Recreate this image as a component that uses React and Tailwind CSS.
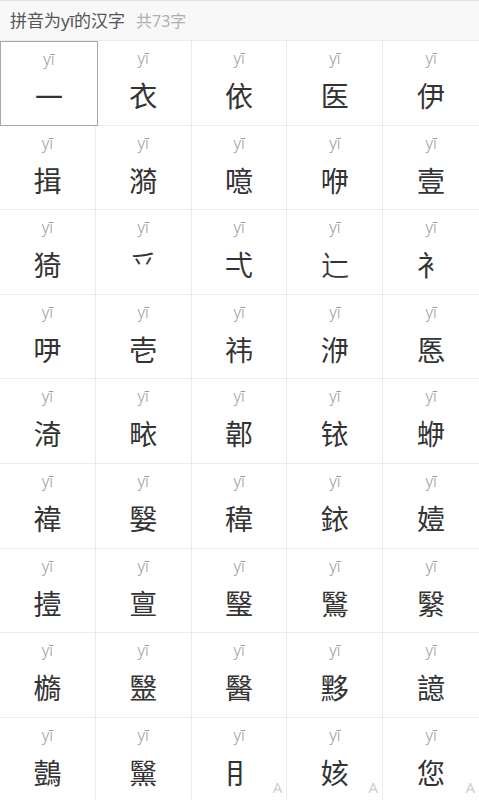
import React from "react";

const chars = [
  "一","衣","依","医","伊",
  "揖","漪","噫","咿","壹",
  "猗","乊","弌","辷","衤",
  "吚","壱","祎","洢","悘",
  "渏","畩","郼","铱","蛜",
  "禕","嫛","稦","銥","嬄",
  "撎","亶","瑿","鷖","繄",
  "檹","毉","醫","黟","譩",
  "鷧","黳","⺝","姟","您",
];

export default function App() {
  return (
    <div
      className="w-[479px] h-[800px] overflow-hidden bg-white"
      style={{ fontFamily: '"Noto Sans", "Noto Sans CJK SC", sans-serif' }}
    >
      <div className="h-[41px] flex items-center px-[10px] bg-[#f8f8f8] border-t border-[#e2e2e2] border-b border-b-[#ececec]">
        <span className="text-[17px] text-[#555]">拼音为yī的汉字</span>
        <span className="ml-[11px] text-[16px] text-[#b0b0b0]">共73字</span>
      </div>
      <div className="grid grid-cols-5">
        {chars.map((c, i) => {
          const row = Math.floor(i / 5);
          const col = i % 5;
          const selected = i === 0;
          const badge = row === 8 && col >= 2;
          return (
            <div
              key={i}
              className={
                "relative h-[84.6px] flex flex-col items-center pt-[7px] " +
                (selected
                  ? "border border-[#a8a8a8] mr-[-2px] z-10 bg-white "
                  : "border-b border-[#ececec] ") +
                (!selected && col < 4 ? "border-r " : "")
              }
            >
              <div className="text-[16px] leading-[20px] text-[#9a9a9a] font-light">yī</div>
              <div
                className="mt-[9px] text-[28px] leading-[36px] text-[#333]"
                style={{ fontFamily: '"Noto Sans CJK SC", sans-serif' }}
              >
                {c}
              </div>
              {badge && (
                <span className="absolute right-[4px] top-[58px] text-[15px] text-[#cfcfcf]">A</span>
              )}
            </div>
          );
        })}
      </div>
    </div>
  );
}
